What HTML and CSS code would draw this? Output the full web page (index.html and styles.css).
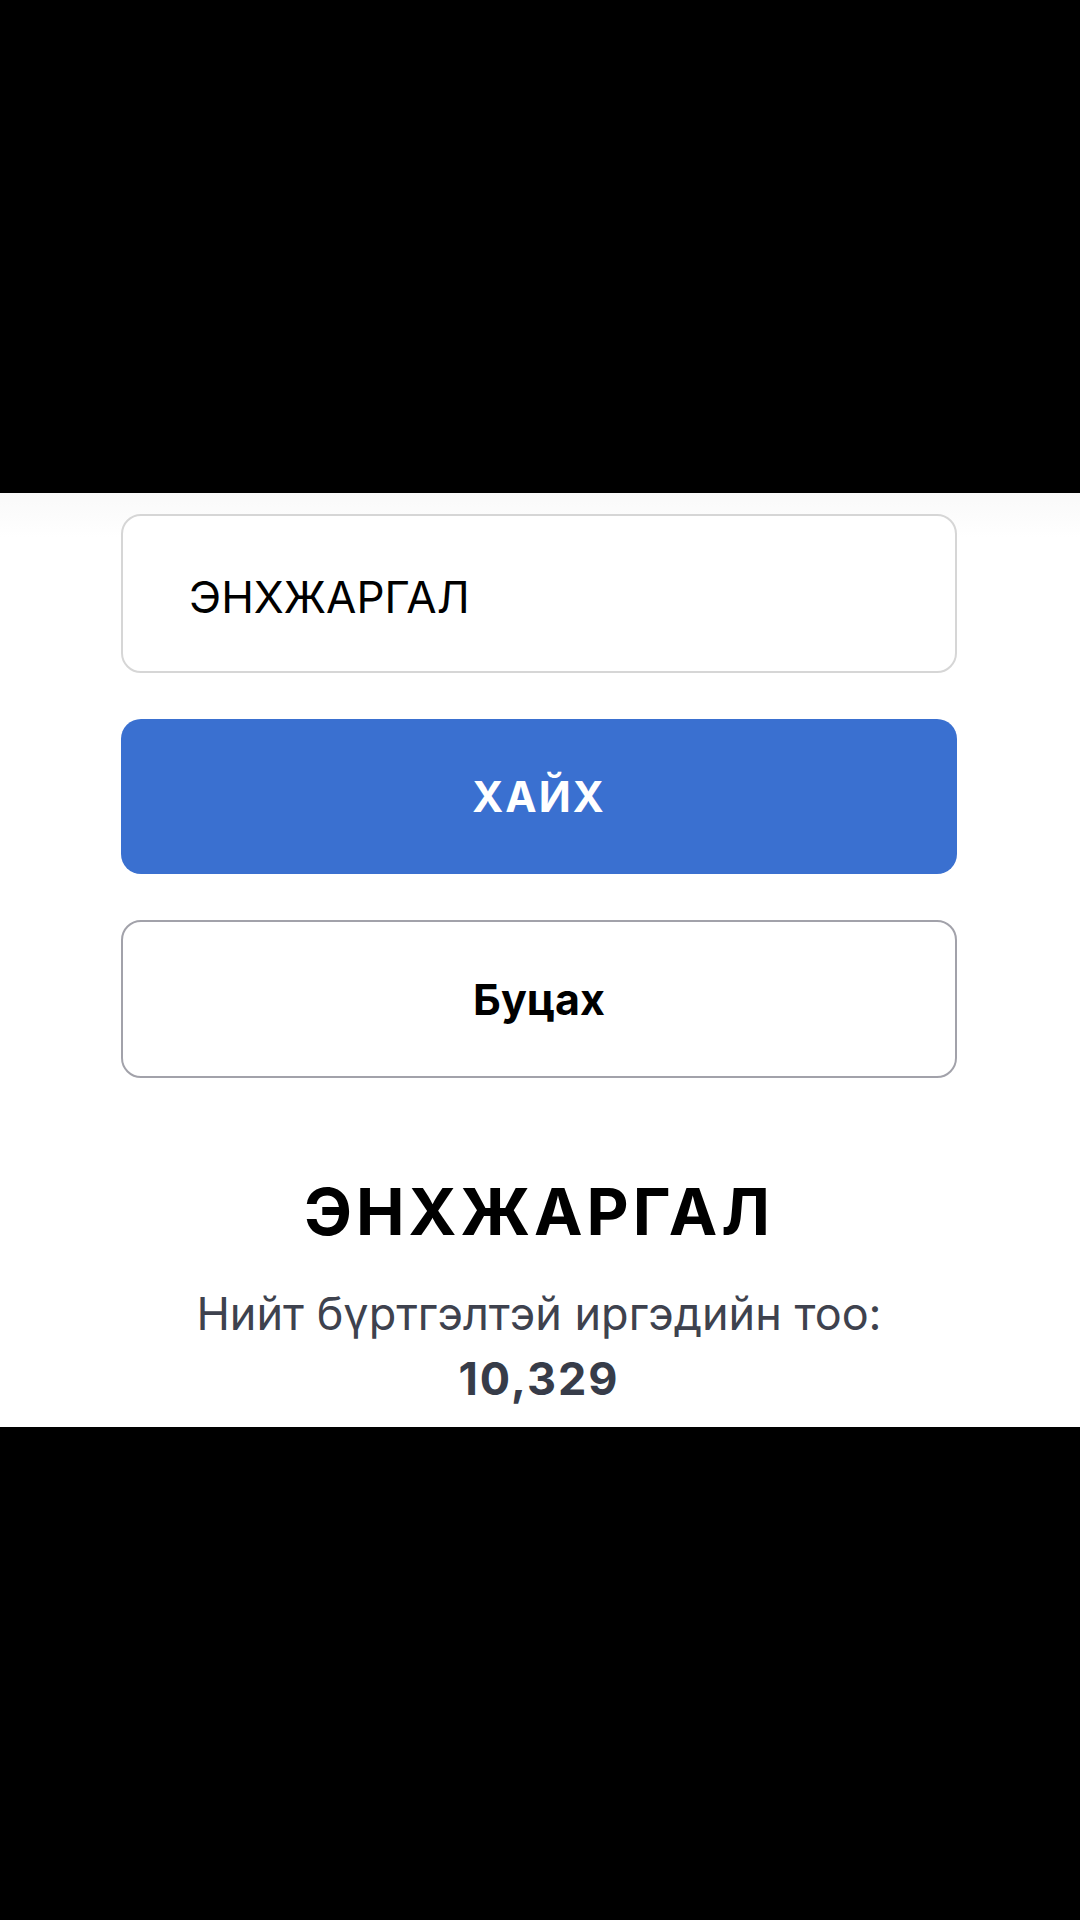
FILE: index.html
```html
<!DOCTYPE html>
<html lang="mn">
<head>
<meta charset="utf-8">
<title>Иргэн хайх</title>
<link rel="stylesheet" href="styles.css">
</head>
<body>
  <div class="letterbox letterbox--top"></div>
  <main class="panel">
    <div class="search">
      <div class="search__field">
        <span class="search__value">ЭНХЖАРГАЛ</span>
      </div>
      <button class="btn btn--primary" type="button">ХАЙХ</button>
      <button class="btn btn--outline" type="button">Буцах</button>
    </div>
    <section class="result">
      <h1 class="result__name">ЭНХЖАРГАЛ</h1>
      <p class="result__label">Нийт бүртгэлтэй иргэдийн тоо:</p>
      <p class="result__count">10,329</p>
    </section>
  </main>
  <div class="letterbox letterbox--bottom"></div>
</body>
</html>
```

FILE: styles.css
```css
* {
  box-sizing: border-box;
}

html,
body {
  margin: 0;
  padding: 0;
  background: #000;
}

body {
  width: 1080px;
  height: 1920px;
  display: flex;
  flex-direction: column;
  font-family: Inter, "Noto Sans", "Liberation Sans", sans-serif;
  color: #000;
}

.letterbox--top {
  height: 493px;
  background: #000;
}

.letterbox--bottom {
  flex: 1;
  background: #000;
}

.panel {
  height: 934px;
  background: linear-gradient(#f9f9f9 0, #fdfdfd 30px, #fff 44px);
  padding: 21px 0 0 121px;
}

.search {
  width: 836px;
  display: flex;
  flex-direction: column;
  gap: 46px;
}

.search__field {
  height: 159px;
  border: 2.5px solid #d6d6d6;
  border-radius: 20px;
  background: #fff;
  display: flex;
  align-items: center;
  padding: 6px 0 0 66px;
}

.search__value {
  font-size: 44px;
  font-weight: 400;
  color: #000;
  letter-spacing: 0;
}

.btn {
  font-family: inherit;
  border-radius: 20px;
  display: flex;
  align-items: center;
  justify-content: center;
  cursor: pointer;
  padding: 0;
}

.btn--primary {
  height: 155px;
  background: #3a70d0;
  border: none;
  color: #fff;
  font-size: 42px;
  font-weight: 700;
  letter-spacing: 2px;
}

.btn--outline {
  height: 158px;
  background: #fff;
  border: 2.5px solid #a2a2aa;
  color: #000;
  font-size: 43px;
  font-weight: 700;
}

.result {
  width: 836px;
  text-align: center;
  padding-top: 94px;
}

.result__name {
  margin: 0;
  font-size: 65px;
  line-height: 80px;
  font-weight: 700;
  letter-spacing: 4px;
  color: #000;
}

.result__label {
  margin: 34px 0 0;
  font-size: 45px;
  line-height: 56px;
  font-weight: 400;
  color: #3e424e;
}

.result__count {
  margin: 9px 0 0;
  font-size: 45px;
  line-height: 56px;
  font-weight: 700;
  color: #373c49;
  letter-spacing: 2px;
}
```
